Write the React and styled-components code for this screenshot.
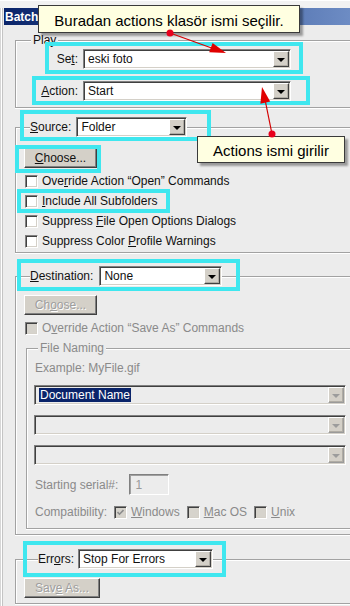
import React from "react";
import styled, { createGlobalStyle } from "styled-components";

const GlobalStyle = createGlobalStyle`
  html, body {
    margin: 0;
    padding: 0;
    background: #ececec;
    overflow: hidden;
  }
  body {
    font-family: "Liberation Sans", Arial, sans-serif;
    font-size: 12px;
    color: #111;
  }
`;

const Window = styled.div`
  position: relative;
  width: 350px;
  height: 606px;
  overflow: hidden;
  background: #ececec;
  box-shadow: inset 1px 0 #d6d6d6, inset 2px 0 #fff, inset 3px 0 #c4c4c4;
`;

const TopFrame = styled.div`
  height: 8px;
  background: #f2f2f2;
  border-top: 1px solid #fff;
  box-sizing: border-box;
`;

const TitleBar = styled.div`
  height: 17px;
  margin-left: 4px;
  padding-left: 1px;
  display: flex;
  align-items: center;
  background: linear-gradient(90deg, #0a246a 0%, #2f4f92 40%, #6d8cc4 100%);
  color: #fff;
  font-weight: bold;
  font-size: 12px;
`;

const Content = styled.div`
  width: 360px;
  box-sizing: border-box;
  padding-left: 15px;
`;

const Group = styled.fieldset`
  margin: ${(p) => p.$mt || 0}px 0 0 ${(p) => p.$ml || 0}px;
  padding: 0 0 ${(p) => p.$pb || 0}px 0;
  min-width: 0;
  border: 1px solid #a2a2a2;
  border-right: none;
  box-shadow: inset 1px 1px 0 #fff, 0 1px 0 #fff;
`;

const Legend = styled.legend`
  margin-left: ${(p) => p.$ml}px;
  padding: 0 ${(p) => p.$px || 0}px;
  background: #ececec;
  line-height: 14px;
  color: ${(p) => (p.$disabled ? "#8a8a8a" : "#111")};
`;

const Highlight = styled.div`
  position: relative;
  display: flex;
  align-items: center;
  width: fit-content;
  gap: ${(p) => p.$gap || 0}px;
  margin-top: ${(p) => p.$mt || 0}px;
  &::after {
    content: "";
    position: absolute;
    inset: ${(p) => p.$inset};
    border: 4px solid #3fe7ef;
    pointer-events: none;
    z-index: 2;
  }
`;

const Key = styled.span`
  text-decoration: underline;
  text-underline-offset: 1px;
`;

const FieldRow = styled.div`
  display: flex;
  align-items: center;
`;

const FieldLabel = styled.span`
  width: 62px;
  margin-right: 5px;
  text-align: right;
  line-height: 14px;
`;

const Label = styled.span`
  line-height: 14px;
  white-space: nowrap;
`;

const SelectBox = styled.div`
  display: flex;
  align-items: center;
  box-sizing: border-box;
  width: ${(p) => p.$w}px;
  height: 20px;
  padding: 0 1px 0 4px;
  background: ${(p) => (p.$disabled ? "#ececec" : "#fff")};
  border-top: 1px solid #808080;
  border-left: 1px solid #808080;
  border-bottom: 1px solid #fff;
  border-right: 1px solid #fff;
  box-shadow: inset 1px 1px 0 #404040, inset -1px -1px 0 #d4d0c8;
`;

const SelectText = styled.span`
  flex: 1;
  white-space: nowrap;
  overflow: hidden;
  line-height: 14px;
`;

const Selected = styled.span`
  background: #0a246a;
  color: #fff;
  padding: 0 1px;
`;

const DropButton = styled.span`
  flex: none;
  width: 16px;
  height: 16px;
  box-sizing: border-box;
  display: flex;
  align-items: center;
  justify-content: center;
  background: #d4d0c8;
  border-top: 1px solid #fff;
  border-left: 1px solid #fff;
  border-right: 1px solid ${(p) => (p.$disabled ? "#9a9a9a" : "#404040")};
  border-bottom: 1px solid ${(p) => (p.$disabled ? "#9a9a9a" : "#404040")};
  box-shadow: inset -1px -1px 0 #b0aca4;
  &::before {
    content: "";
    border-left: 4px solid transparent;
    border-right: 4px solid transparent;
    border-top: 4px solid ${(p) => (p.$disabled ? "#9c9c9c" : "#000")};
    margin-top: 1px;
  }
`;

const ButtonRow = styled.div`
  display: flex;
  margin: ${(p) => p.$mt || 0}px 0 0 ${(p) => p.$ml || 0}px;
`;

const Button = styled.button`
  box-sizing: border-box;
  width: ${(p) => p.$w}px;
  height: 20px;
  padding: 0;
  font: inherit;
  color: ${(p) => (p.disabled ? "#9e9e9e" : "#111")};
  text-shadow: ${(p) => (p.disabled ? "1px 1px 0 #fff" : "none")};
  background: #d4d0c8;
  border-top: 1px solid #fff;
  border-left: 1px solid #fff;
  border-right: 1px solid #404040;
  border-bottom: 1px solid #404040;
  box-shadow: inset -1px -1px 0 #808080;
`;

const Checks = styled.div`
  display: flex;
  flex-direction: column;
  align-items: flex-start;
  gap: 6px;
  margin: ${(p) => p.$mt || 0}px 0 0 ${(p) => p.$ml || 0}px;
`;

const CheckRow = styled.div`
  display: flex;
  align-items: center;
  gap: 4px;
  height: 14px;
  white-space: nowrap;
  color: ${(p) => (p.$disabled ? "#8a8a8a" : "#111")};
`;

const Box = styled.span`
  flex: none;
  width: 13px;
  height: 13px;
  box-sizing: border-box;
  display: flex;
  align-items: center;
  justify-content: center;
  background: ${(p) => (p.$disabled ? "#d6d3cc" : "#fff")};
  border-top: 1px solid #808080;
  border-left: 1px solid #808080;
  border-right: 1px solid #fff;
  border-bottom: 1px solid #fff;
  box-shadow: inset 1px 1px 0 #404040, inset -1px -1px 0 #d4d0c8;
`;

const Note = styled.div`
  line-height: 14px;
  color: #8a8a8a;
  white-space: nowrap;
  margin: ${(p) => p.$mt || 0}px 0 0 ${(p) => p.$ml || 0}px;
`;

const Stack = styled.div`
  display: flex;
  flex-direction: column;
  gap: 10px;
  margin: ${(p) => p.$mt || 0}px 0 0 ${(p) => p.$ml || 0}px;
`;

const FlexRow = styled.div`
  display: flex;
  align-items: center;
  gap: ${(p) => p.$gap || 0}px;
  margin: ${(p) => p.$mt || 0}px 0 0 ${(p) => p.$ml || 0}px;
  color: #8a8a8a;
`;

const SerialInput = styled.div`
  box-sizing: border-box;
  width: 40px;
  height: 21px;
  padding-left: 5px;
  display: flex;
  align-items: center;
  color: #9a9a9a;
  border-top: 1px solid #808080;
  border-left: 1px solid #808080;
  border-bottom: 1px solid #fff;
  border-right: 1px solid #fff;
  box-shadow: inset 1px 1px 0 #a0a0a0;
`;

const Tip = styled.div`
  position: absolute;
  left: ${(p) => p.$x}px;
  top: ${(p) => p.$y}px;
  width: ${(p) => p.$w}px;
  height: ${(p) => p.$h}px;
  box-sizing: border-box;
  display: flex;
  align-items: center;
  justify-content: center;
  padding-top: 2px;
  background: #ffffe1;
  border: 1px solid #3a3a3a;
  box-shadow: 3px 3px 2px rgba(0, 0, 0, 0.35);
  font-size: 15px;
  color: #000;
  white-space: nowrap;
  z-index: 4;
`;

const Pointers = styled.svg`
  position: absolute;
  left: 0;
  top: 0;
  width: 350px;
  height: 606px;
  pointer-events: none;
  z-index: 5;
`;

function Select({ w, disabled, children }) {
  return (
    <SelectBox $w={w} $disabled={disabled}>
      <SelectText>{children}</SelectText>
      <DropButton $disabled={disabled} />
    </SelectBox>
  );
}

function Check({ disabled, checked, children }) {
  return (
    <CheckRow $disabled={disabled}>
      <Box $disabled={disabled}>
        {checked && (
          <svg width="7" height="7" viewBox="0 0 7 7">
            <polyline points="0.5,3 2.5,5.2 6.5,1" fill="none" stroke="#8c8c8c" strokeWidth="1.6" />
          </svg>
        )}
      </Box>
      <span>{children}</span>
    </CheckRow>
  );
}

export default function App() {
  return (
    <>
      <GlobalStyle />
      <Window>
        <TopFrame />
        <TitleBar>Batch</TitleBar>
        <Content>
          <Group $mt={8} $pb={6}>
            <Legend $ml={15} $px={2}>Play</Legend>
            <Highlight $mt={2} $inset="-7px -12px -5px 29px">
              <FieldRow>
                <FieldLabel>
                  Se<Key>t</Key>:
                </FieldLabel>
                <Select w={208}>eski foto</Select>
              </FieldRow>
            </Highlight>
            <Highlight $mt={12} $inset="-5px -19px -4px 16px">
              <FieldRow>
                <FieldLabel>
                  <Key>A</Key>ction:
                </FieldLabel>
                <Select w={208}>Start</Select>
              </FieldRow>
            </Highlight>
          </Group>

          <Group $mt={9} $pb={4}>
            <Legend $ml={14}>
              <Highlight $gap={5} $inset="-7px -24px -4px -10px">
                <Label>
                  <Key>S</Key>ource:
                </Label>
                <Select w={111}>Folder</Select>
              </Highlight>
            </Legend>
            <ButtonRow $mt={11} $ml={8}>
              <Highlight $inset="-3px -4px -5px -9px">
                <Button $w={73}>
                  <Key>C</Key>hoose...
                </Button>
              </Highlight>
            </ButtonRow>
            <Checks $mt={6} $ml={9}>
              <Check>
                Ove<Key>r</Key>ride Action “Open” Commands
              </Check>
              <Highlight $inset="-5px -13px -5px -8px">
                <Check>
                  <Key>I</Key>nclude All Subfolders
                </Check>
              </Highlight>
              <Check>
                Suppress <Key>F</Key>ile Open Options Dialogs
              </Check>
              <Check>
                Suppress Color <Key>P</Key>rofile Warnings
              </Check>
            </Checks>
          </Group>

          <Group $mt={13} $pb={5}>
            <Legend $ml={14}>
              <Highlight $gap={6} $inset="-7px -18px -5px -13px">
                <Label>
                  <Key>D</Key>estination:
                </Label>
                <Select w={123}>None</Select>
              </Highlight>
            </Legend>
            <ButtonRow $mt={9} $ml={8}>
              <Button $w={73} disabled>
                Ch<Key>o</Key>ose...
              </Button>
            </ButtonRow>
            <Checks $mt={6} $ml={9}>
              <Check disabled>
                O<Key>v</Key>erride Action “Save As” Commands
              </Check>
            </Checks>
            <Group $mt={6} $ml={10} $pb={9}>
              <Legend $ml={11} $px={2} $disabled>
                File Naming
              </Legend>
              <Note $mt={6} $ml={8}>Example: MyFile.gif</Note>
              <Stack $mt={10} $ml={7}>
                <Select w={312} disabled>
                  <Selected>Document Name</Selected>
                </Select>
                <Select w={312} disabled />
                <Select w={312} disabled />
              </Stack>
              <FlexRow $mt={9} $ml={8} $gap={11}>
                <Label>Starting serial#:</Label>
                <SerialInput>1</SerialInput>
              </FlexRow>
              <FlexRow $mt={10} $ml={8} $gap={7}>
                <Label>Compatibility:</Label>
                <Check disabled checked>
                  <Key>W</Key>indows
                </Check>
                <Check disabled>
                  <Key>M</Key>ac OS
                </Check>
                <Check disabled>
                  <Key>U</Key>nix
                </Check>
              </FlexRow>
            </Group>
          </Group>

          <Group $mt={14} $pb={5}>
            <Legend $ml={22}>
              <Highlight $gap={4} $inset="-8px -13px -8px -15px">
                <Label>
                  Err<Key>o</Key>rs:
                </Label>
                <Select w={135}>Stop For Errors</Select>
              </Highlight>
            </Legend>
            <ButtonRow $mt={9} $ml={8}>
              <Button $w={76} disabled>
                Sav<Key>e</Key> As...
              </Button>
            </ButtonRow>
          </Group>
        </Content>

        <Tip $x={38} $y={5} $w={262} $h={28}>
          Buradan actions klasör ismi seçilir.
        </Tip>
        <Tip $x={197} $y={136} $w={148} $h={27}>
          Actions ismi girilir
        </Tip>

        <Pointers viewBox="0 0 350 606">
          <line x1="170" y1="33" x2="213" y2="48.5" stroke="#d40000" strokeWidth="1.2" />
          <polygon points="226,53 212.6,42.9 209.2,52.3" fill="#e00000" />
          <circle cx="170" cy="33" r="3.5" fill="#e8001c" />
          <line x1="272" y1="134" x2="265.5" y2="102" stroke="#d40000" strokeWidth="1.2" />
          <polygon points="262,87 270.2,101.6 260.4,103.7" fill="#e00000" />
          <circle cx="272" cy="134" r="3.5" fill="#e8001c" />
        </Pointers>
      </Window>
    </>
  );
}
